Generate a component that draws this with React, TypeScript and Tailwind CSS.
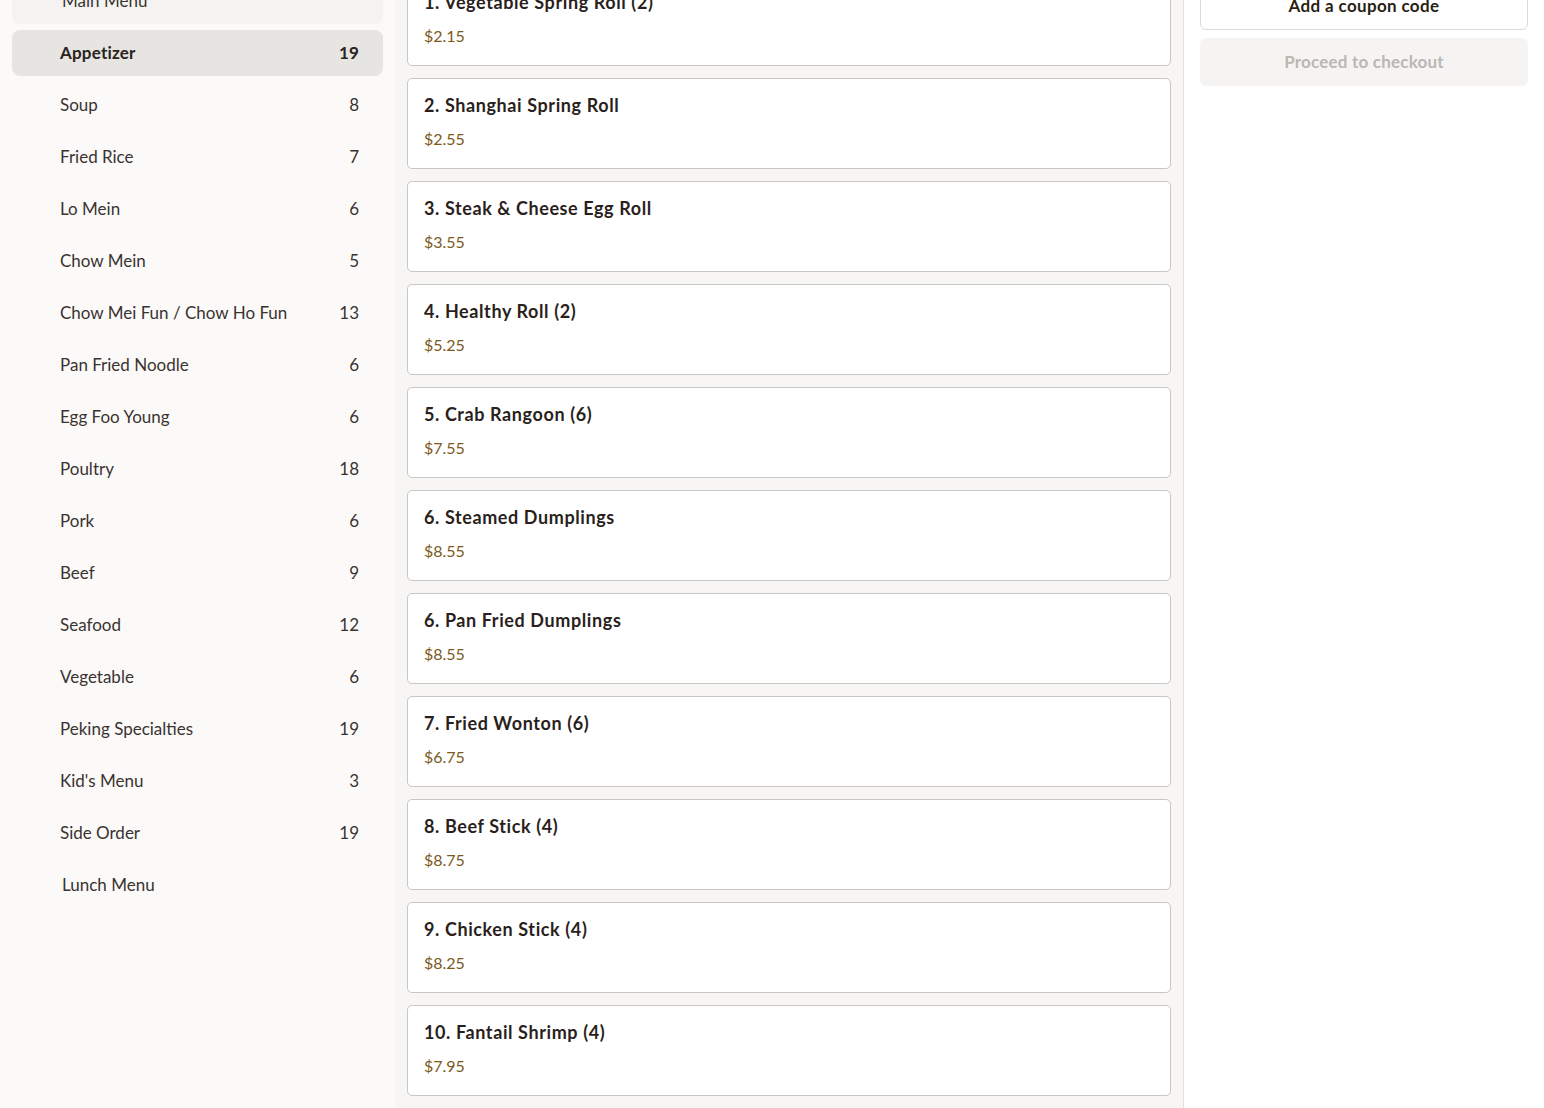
import React from "react";

const cats: [string, number | null][] = [
  ["Soup", 8],
  ["Fried Rice", 7],
  ["Lo Mein", 6],
  ["Chow Mein", 5],
  ["Chow Mei Fun / Chow Ho Fun", 13],
  ["Pan Fried Noodle", 6],
  ["Egg Foo Young", 6],
  ["Poultry", 18],
  ["Pork", 6],
  ["Beef", 9],
  ["Seafood", 12],
  ["Vegetable", 6],
  ["Peking Specialties", 19],
  ["Kid's Menu", 3],
  ["Side Order", 19],
];

const items: [string, string][] = [
  ["1. Vegetable Spring Roll (2)", "$2.15"],
  ["2. Shanghai Spring Roll", "$2.55"],
  ["3. Steak & Cheese Egg Roll", "$3.55"],
  ["4. Healthy Roll (2)", "$5.25"],
  ["5. Crab Rangoon (6)", "$7.55"],
  ["6. Steamed Dumplings", "$8.55"],
  ["6. Pan Fried Dumplings", "$8.55"],
  ["7. Fried Wonton (6)", "$6.75"],
  ["8. Beef Stick (4)", "$8.75"],
  ["9. Chicken Stick (4)", "$8.25"],
  ["10. Fantail Shrimp (4)", "$7.95"],
  ["11. Fried Shrimp (6)", "$7.95"],
];

export default function App() {
  return (
    <div
      className="flex h-[1108px] w-[1544px] overflow-hidden text-[#2a2320]"
      style={{ fontFamily: "Lato, 'Noto Sans', sans-serif" }}
    >
      <aside className="w-[395px] shrink-0 bg-[#fbfaf9] px-3">
        <div className="mt-[-22px] flex flex-col gap-[6px]">
          <div className="flex h-[46px] items-center rounded-lg bg-[#f4f3f1] pl-[50px] text-[17px] text-[#3a3330]">
            Main Menu
          </div>
          <div className="flex h-[46px] items-center justify-between rounded-lg bg-[#e6e5e2] pl-12 pr-6 text-[17px] font-bold tracking-[0.2px] text-[#2a2320]">
            <span>Appetizer</span>
            <span>19</span>
          </div>
          {cats.map(([n, c]) => (
            <div
              key={n}
              className="flex h-[46px] items-center justify-between rounded-lg pl-12 pr-6 text-[17px] text-[#3a3330]"
            >
              <span>{n}</span>
              <span>{c}</span>
            </div>
          ))}
          <div className="flex h-[46px] items-center pl-[50px] text-[17px] text-[#3a3330]">
            Lunch Menu
          </div>
        </div>
      </aside>
      <main className="w-[789px] shrink-0 border-r border-[#e4e2de] bg-[#f7f6f4] px-3">
        <div className="mt-[-25px] flex flex-col gap-3">
          {items.map(([t, p]) => (
            <div
              key={t}
              className="rounded-[5px] border border-[#c9c7c4] bg-white px-4 pb-[18px] pt-[15px]"
            >
              <div className="text-[18px] font-bold leading-[22px] tracking-[0.6px] text-[#2a1f1c]">{t}</div>
              <div className="mt-3 text-[16px] leading-[22px] text-[#7b5a1c]">{p}</div>
            </div>
          ))}
        </div>
      </main>
      <section className="flex-1 bg-white px-4">
        <div className="mt-[-18px] flex flex-col gap-2">
          <button className="h-[48px] w-full rounded-md border border-[#dcdad6] bg-white text-[17px] font-bold tracking-[0.35px] text-[#2a1f14]">
            Add a coupon code
          </button>
          <button className="h-[48px] w-full rounded-md bg-[#f5f4f2] text-[17px] font-bold tracking-[0.2px] text-[#bab7b2]">
            Proceed to checkout
          </button>
        </div>
      </section>
    </div>
  );
}
